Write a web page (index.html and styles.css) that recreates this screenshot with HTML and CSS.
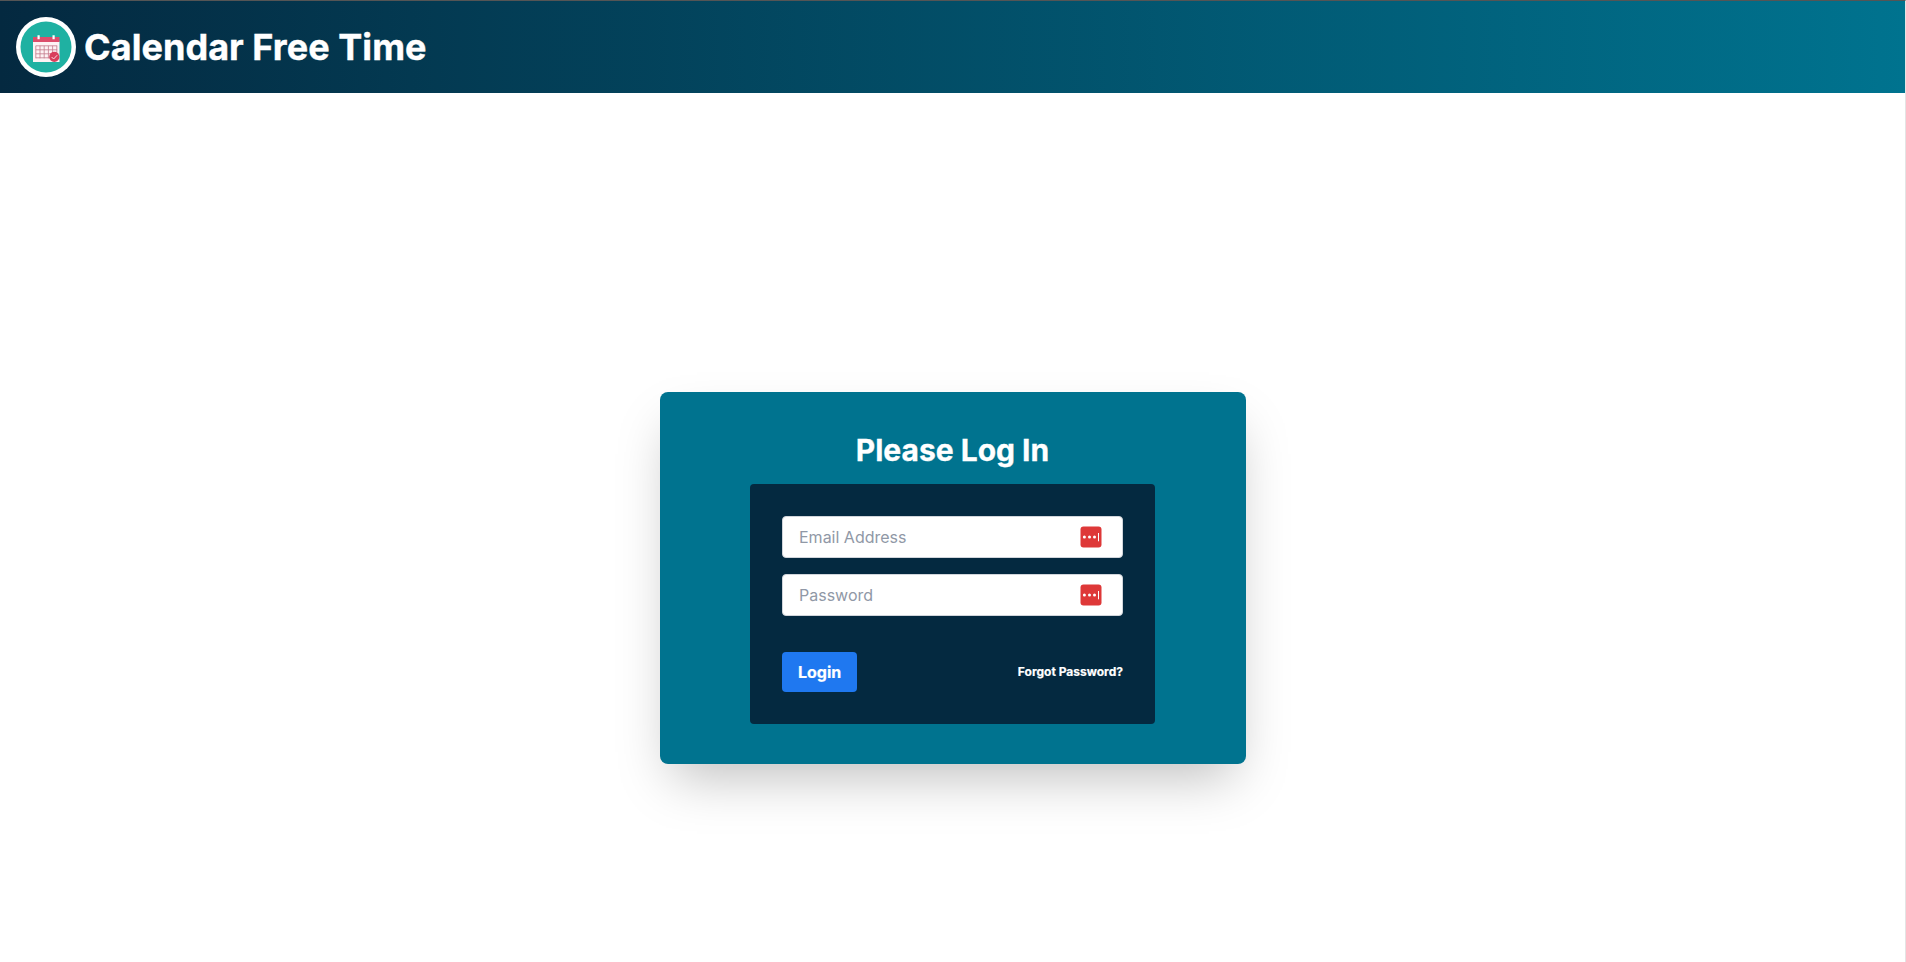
FILE: index.html
```html
<!DOCTYPE html>
<html lang="en">
<head>
<meta charset="utf-8">
<title>Calendar Free Time</title>
<link rel="stylesheet" href="styles.css">
</head>
<body>
<div class="page">
  <header class="header">
    <svg class="logo" viewBox="0 0 60 60" aria-hidden="true">
      <circle cx="30" cy="30" r="30" fill="#fff"/>
      <circle cx="30" cy="30" r="25.5" fill="#1fb1a2"/>
      <path d="M17 24.5h26.5V45H17z" fill="#fdf3f4"/>
      <path d="M17 20h26.5v5H17z" fill="#dc4e6b"/>
      <path d="M21.5 18.2h2.2v4h-2.2zM36.5 18.2h2.2v4h-2.2z" fill="#fff"/>
      <path d="M19.8 28.8h21.4M19.8 32.8h21.4M19.8 36.8h21.4M19.8 40.8h21.4M19.8 28.8v12.5M24 28.8v12.5M28.2 28.8v12.5M32.4 28.8v12.5M36.6 28.8v12.5M40.8 28.8v12.5" stroke="#c4788a" stroke-width=".8" fill="none"/>
      <circle cx="38.3" cy="39.8" r="5.1" fill="#d93f5c"/>
      <path d="M35.6 40l2 2 3.6-3.8" stroke="#fbdde2" stroke-width="1" fill="none"/>
    </svg>
    <h1 class="brand">Calendar Free Time</h1>
  </header>
  <main class="main">
    <section class="card">
      <h2 class="title">Please Log In</h2>
      <form class="form">
        <div class="field">
          <input class="input" type="email" placeholder="Email Address">
          <svg class="badge" viewBox="0 0 22 22"><rect x=".5" y=".5" width="21" height="21" rx="3" fill="#de3838"/><circle cx="4.4" cy="11" r="1.5" fill="#fff"/><circle cx="9.5" cy="11" r="1.5" fill="#fff"/><circle cx="14.5" cy="11" r="1.5" fill="#fff"/><path d="M18.5 7v8.3" stroke="#fff" stroke-width="1"/></svg>
        </div>
        <div class="field">
          <input class="input" type="password" placeholder="Password">
          <svg class="badge" viewBox="0 0 22 22"><rect x=".5" y=".5" width="21" height="21" rx="3" fill="#de3838"/><circle cx="4.4" cy="11" r="1.5" fill="#fff"/><circle cx="9.5" cy="11" r="1.5" fill="#fff"/><circle cx="14.5" cy="11" r="1.5" fill="#fff"/><path d="M18.5 7v8.3" stroke="#fff" stroke-width="1"/></svg>
        </div>
        <div class="actions">
          <button class="login" type="button">Login</button>
          <a class="forgot">Forgot Password?</a>
        </div>
      </form>
    </section>
  </main>
</div>
</body>
</html>
```

FILE: styles.css
```css
* { box-sizing: border-box; margin: 0; }

body {
  background: #fff;
  font-family: Inter, "Liberation Sans", sans-serif;
}

.page {
  height: 962px;
  overflow: hidden;
  border-top: 1px solid #555;
  border-right: 1px solid #e4e4e4;
}

.header {
  display: flex;
  align-items: center;
  gap: 8px;
  height: 92px;
  padding: 0 16px;
  background: linear-gradient(to right, #042940, #00738f);
}

.logo { width: 60px; height: 60px; }

.brand {
  color: #fff;
  font-size: 36px;
  line-height: 40px;
  font-weight: 700;
  letter-spacing: .05px;
  -webkit-text-stroke: .4px #fff;
}

.main {
  display: flex;
  justify-content: center;
  padding: 299px 0 0 1px;
}

.card {
  width: 586px;
  height: 372px;
  padding: 40px 91px 40px 90px;
  border-radius: 8px;
  background: #00738f;
  box-shadow: 0 25px 50px -12px rgba(0, 0, 0, .25);
}

.title {
  margin-bottom: 16px;
  color: #fff;
  font-size: 30px;
  line-height: 36px;
  font-weight: 700;
  text-align: center;
  -webkit-text-stroke: .3px #fff;
}

.form {
  height: 240px;
  padding: 32px;
  border-radius: 4px;
  background: #042940;
}

.field {
  position: relative;
  margin-bottom: 16px;
}

.input {
  display: block;
  width: 100%;
  height: 42px;
  padding: 8px 16px;
  border: 1px solid #d1d5db;
  border-radius: 4px;
  background: #fff;
  font: 400 16px/24px Inter, "Liberation Sans", sans-serif;
}

.input::placeholder { color: #9098a6; opacity: 1; }

.badge {
  position: absolute;
  top: 10px;
  right: 21px;
  width: 22px;
  height: 22px;
}

.actions {
  display: flex;
  align-items: center;
  justify-content: space-between;
  margin-top: 36px;
}

.login {
  height: 40px;
  padding: 8px 16px;
  border: 0;
  border-radius: 4px;
  background: #1f78f0;
  color: #fff;
  font: 700 16px/24px Inter, "Liberation Sans", sans-serif;
  -webkit-text-stroke: .2px #fff;
}

.forgot {
  color: #fff;
  font-size: 12px;
  line-height: 16px;
  font-weight: 700;
  -webkit-text-stroke: .2px #fff;
}
```
